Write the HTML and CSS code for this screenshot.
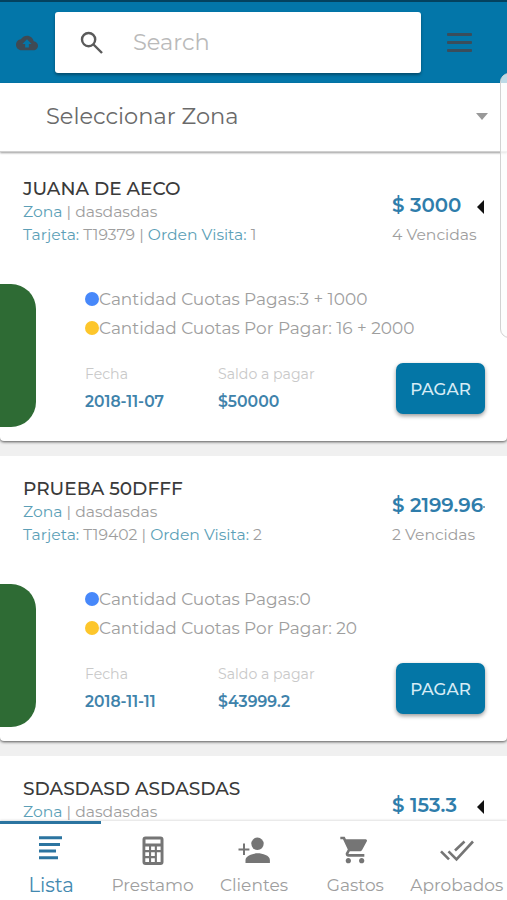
FILE: index.html
```
<!DOCTYPE html>
<html lang="es">
<head>
<meta charset="utf-8">
<title>Lista</title>
<link rel="stylesheet" href="styles.css">
</head>
<body>
<div class="app">
  <header class="topbar">
    <svg class="cloud" viewBox="0 0 24 24"><path d="M19.35 10.04C18.67 6.59 15.64 4 12 4 9.11 4 6.6 5.64 5.35 8.04 2.34 8.36 0 10.91 0 14c0 3.31 2.69 6 6 6h13c2.76 0 5-2.24 5-5 0-2.64-2.05-4.78-4.65-4.96zM14 13v4h-4v-4H7l5-5 5 5h-3z"/></svg>
    <label class="search">
      <svg class="lens" viewBox="0 0 24 24"><circle cx="8.6" cy="8.6" r="6.6"/><path d="M13.5 13.5L22 22"/></svg>
      <span>Search</span>
    </label>
    <div class="burger"><i></i><i></i><i></i></div>
  </header>

  <div class="zone"><span>Seleccionar Zona</span><i class="caret"></i></div>

  <main class="list">
    <article class="card">
      <div class="head">
        <div class="who">
          <h2>JUANA DE AECO</h2>
          <p><b>Zona</b> | dasdasdas</p>
          <p><b>Tarjeta:</b> T19379 | <b>Orden Visita:</b> 1</p>
        </div>
        <div class="due">
          <div class="price"><span>$ 3000</span><i class="arrow"></i></div>
          <p>4 Vencidas</p>
        </div>
      </div>
      <div class="body">
        <div class="status"></div>
        <div class="info">
          <div class="count"><i class="dot blue"></i>Cantidad Cuotas Pagas:3 + 1000</div>
          <div class="count"><i class="dot yellow"></i>Cantidad Cuotas Por Pagar: 16 + 2000</div>
          <div class="meta">
            <dl class="date"><dt>Fecha</dt><dd>2018-11-07</dd></dl>
            <dl class="balance"><dt>Saldo a pagar</dt><dd>$50000</dd></dl>
            <button class="pay">PAGAR</button>
          </div>
        </div>
      </div>
    </article>

    <article class="card">
      <div class="head">
        <div class="who">
          <h2>PRUEBA 50DFFF</h2>
          <p><b>Zona</b> | dasdasdas</p>
          <p><b>Tarjeta:</b> T19402 | <b>Orden Visita:</b> 2</p>
        </div>
        <div class="due">
          <div class="price"><span>$ 2199.96</span><i class="tick"></i></div>
          <p>2 Vencidas</p>
        </div>
      </div>
      <div class="body">
        <div class="status"></div>
        <div class="info">
          <div class="count"><i class="dot blue"></i>Cantidad Cuotas Pagas:0</div>
          <div class="count"><i class="dot yellow"></i>Cantidad Cuotas Por Pagar: 20</div>
          <div class="meta">
            <dl class="date"><dt>Fecha</dt><dd>2018-11-11</dd></dl>
            <dl class="balance"><dt>Saldo a pagar</dt><dd>$43999.2</dd></dl>
            <button class="pay">PAGAR</button>
          </div>
        </div>
      </div>
    </article>

    <article class="card">
      <div class="head">
        <div class="who">
          <h2>SDASDASD ASDASDAS</h2>
          <p><b>Zona</b> | dasdasdas</p>
        </div>
        <div class="due">
          <div class="price"><span>$ 153.3</span><i class="arrow"></i></div>
        </div>
      </div>
    </article>
  </main>

  <nav class="tabs">
    <a class="tab active">
      <svg viewBox="0 0 32 32"><path d="M4 2.2h23v3H4zM4 9h21v3H4zM4 15.6h17v3H4zM4 22.2h19v3H4z"/></svg>
      <span>Lista</span>
    </a>
    <a class="tab">
      <svg viewBox="0 0 32 32"><path fill-rule="evenodd" d="M8.500 2.500h15a3 3 0 0 1 3 3v22.500a3 3 0 0 1-3 3h-15a3 3 0 0 1-3-3v-22.500a3 3 0 0 1 3-3zM8.500 5.500v4h15v-4zM8.300 12.500v3.600h3.700v-3.600zM14.100 12.500v3.600h3.700v-3.600zM19.900 12.500v3.600h3.700v-3.600zM8.300 18.300v3.600h3.700v-3.600zM14.100 18.300v3.600h3.700v-3.600zM19.900 18.300v9.700h3.700v-9.700zM8.300 24.200v3.700h3.700v-3.700zM14.100 24.200v3.700h3.700v-3.700z"/></svg>
      <span>Prestamo</span>
    </a>
    <a class="tab">
      <svg viewBox="0 0 32 32"><circle cx="19.500" cy="9.800" r="6.200"/><path d="M7.500 29v-3c0-4.500 7.500-6.700 12.200-6.700s12.200 2.200 12.200 6.700v3zM5 9.500h2v4.900h4.400v2H7v4.600H5v-4.600H.5v-2H5z"/></svg>
      <span>Clientes</span>
    </a>
    <a class="tab">
      <svg class="cart" viewBox="0 0 24 24"><path d="M7 18c-1.100 0-1.990.9-1.990 2S5.900 22 7 22s2-.9 2-2-.9-2-2-2zM1 2v2h2l3.600 7.590-1.350 2.450c-.16.28-.25.61-.25.96 0 1.100.9 2 2 2h12v-2H7.420c-.14 0-.25-.11-.25-.25l.03-.12.9-1.630h7.450c.75 0 1.410-.41 1.750-1.030l3.580-6.490A1 1 0 0 0 20 4H5.210l-.94-2H1zm16 16c-1.100 0-1.990.9-1.990 2s.89 2 1.990 2 2-.9 2-2-.9-2-2-2z"/></svg>
      <span>Gastos</span>
    </a>
    <a class="tab">
      <svg class="checks" viewBox="0 0 32 32"><path d="M0 17.300l8 8M7.500 17.300l8 8L32 7.500M14 16.500l9.500-9"/></svg>
      <span>Aprobados</span>
    </a>
  </nav>
  <div class="edge-panel"></div>
</div>
</body>
</html>
```
FILE: styles.css
```
* { box-sizing: border-box; margin: 0; padding: 0; }

body {
  font-family: Montserrat, "Open Sans", sans-serif;
  background: #f0f0f0;
  color: #9e9e9e;
  overflow: hidden;
}

.app {
  position: relative;
  width: 507px;
  height: 900px;
  display: flex;
  flex-direction: column;
  overflow: hidden;
}

.topbar {
  flex: none;
  height: 83px;
  background: #0376a9;
  border-top: 2px solid #04425f;
  display: flex;
  align-items: center;
  padding-left: 16px;
}
.cloud { width: 22px; height: 22px; fill: #3f4a54; }
.search {
  width: 366px;
  height: 61px;
  margin-left: 17px;
  padding: 0 0 1px 25px;
  background: #fff;
  border-radius: 3px;
  box-shadow: 0 2px 3px rgba(0, 0, 0, .35);
  display: flex;
  align-items: center;
  font-size: 22.5px;
  color: #bababa;
}
.lens { width: 24px; height: 24px; margin: 2px 29px 0 0; fill: none; stroke: #5a5a5a; stroke-width: 2.4; }
.burger { margin-left: 26px; width: 25px; display: grid; gap: 5px; }
.burger i { height: 3px; border-radius: 1px; background: #3a4d5b; }

.zone {
  flex: none;
  position: relative;
  z-index: 1;
  height: 69px;
  padding: 0 19px 2px 46px;
  background: #fff;
  border-bottom: 1px solid #d0d0d0;
  box-shadow: 0 1px 2px rgba(0, 0, 0, .4);
  display: flex;
  align-items: center;
  justify-content: space-between;
  font-size: 22.5px;
  color: #6a6a6a;
}
.caret { border: 6.5px solid transparent; border-top: 7px solid #999; border-bottom: 0; }

.list {
  flex: 1;
  min-height: 0;
  overflow: hidden;
  display: flex;
  flex-direction: column;
  gap: 15px;
}
.card {
  flex: none;
  height: 285px;
  background: #fff;
  border-radius: 0 0 4px 4px;
  box-shadow: 0 1px 3px rgba(0, 0, 0, .65);
  clip-path: inset(0 0 -5px 0);
}
.card:first-child { height: 289px; padding-top: 4px; }
.head { height: 128px; padding: 21px 0 0 23px; display: flex; }
.who { width: 369px; }
.who h2 { margin-bottom: 1px; font-size: 18.5px; font-weight: 500; line-height: 23px; color: #3a3a3a; }
.who p, .due p { font-size: 15.6px; line-height: 22px; height: 22.5px; }
.who b { font-weight: 400; color: #5c9fb7; }
.price {
  height: 47px;
  padding-top: 9px;
  display: flex;
  align-items: center;
  font-size: 19.8px;
  font-weight: 600;
  line-height: 26px;
  color: #2f7dab;
}
.price span { width: 85px; white-space: nowrap; }
.arrow { border: 7px solid transparent; border-right: 7px solid #111; border-left: 0; margin-top: 4px; }
.tick { width: 3px; height: 2px; margin: 3px 0 0 5px; background: #7ba9c4; }

.body { display: flex; }
.status { width: 36px; height: 143px; background: #2e6b34; border-radius: 0 25px 25px 0; }
.info { margin-left: 49px; }
.count { height: 29.5px; display: flex; align-items: center; font-size: 16.95px; }
.dot { width: 14px; height: 14px; border-radius: 50%; }
.blue { background: #4788fa; }
.yellow { background: #fdc62b; }
.meta { display: flex; padding-top: 20px; }
.meta dt { font-size: 14.15px; line-height: 23px; color: #c9c9c9; }
.meta dd { font-size: 15.55px; line-height: 22px; font-weight: 600; color: #3f83ab; margin-top: 5px; }
.date { width: 133px; }
.balance { width: 178px; }
.balance dd { font-size: 15.7px; }
.pay {
  width: 89px;
  height: 51px;
  border: 0;
  border-radius: 7px;
  background: #0476a6;
  box-shadow: 0 2px 4px rgba(0, 0, 0, .4);
  color: #d6ebf5;
  font: 500 16.7px Montserrat, "Open Sans", sans-serif;
}

.tabs {
  flex: none;
  position: relative;
  z-index: 1;
  height: 79px;
  background: #fff;
  box-shadow: 0 -1px 2px rgba(0, 0, 0, .12);
  display: grid;
  grid-template-columns: repeat(5, 101.4px);
}
.tab {
  display: flex;
  flex-direction: column;
  align-items: center;
  border-top: 3px solid transparent;
  padding: 10px 0 0 1px;
  font-size: 17px;
  line-height: 24px;
}
.tab svg { flex: none; width: 32px; height: 32px; margin-bottom: 7px; fill: #757575; }
.tab .checks { fill: none; stroke: #757575; stroke-width: 2.6; overflow: visible; }
.tab.active { border-top-color: #2b74a0; font-size: 19.6px; color: #4389b0; }
.tab.active svg { fill: #2b74a0; }

.edge-panel {
  position: absolute;
  z-index: 2;
  left: 500px;
  top: 73px;
  width: 20px;
  height: 265px;
  border: 1.5px solid #d2d2d2;
  border-radius: 9px;
  background: rgba(252, 252, 252, .75);
}
```
